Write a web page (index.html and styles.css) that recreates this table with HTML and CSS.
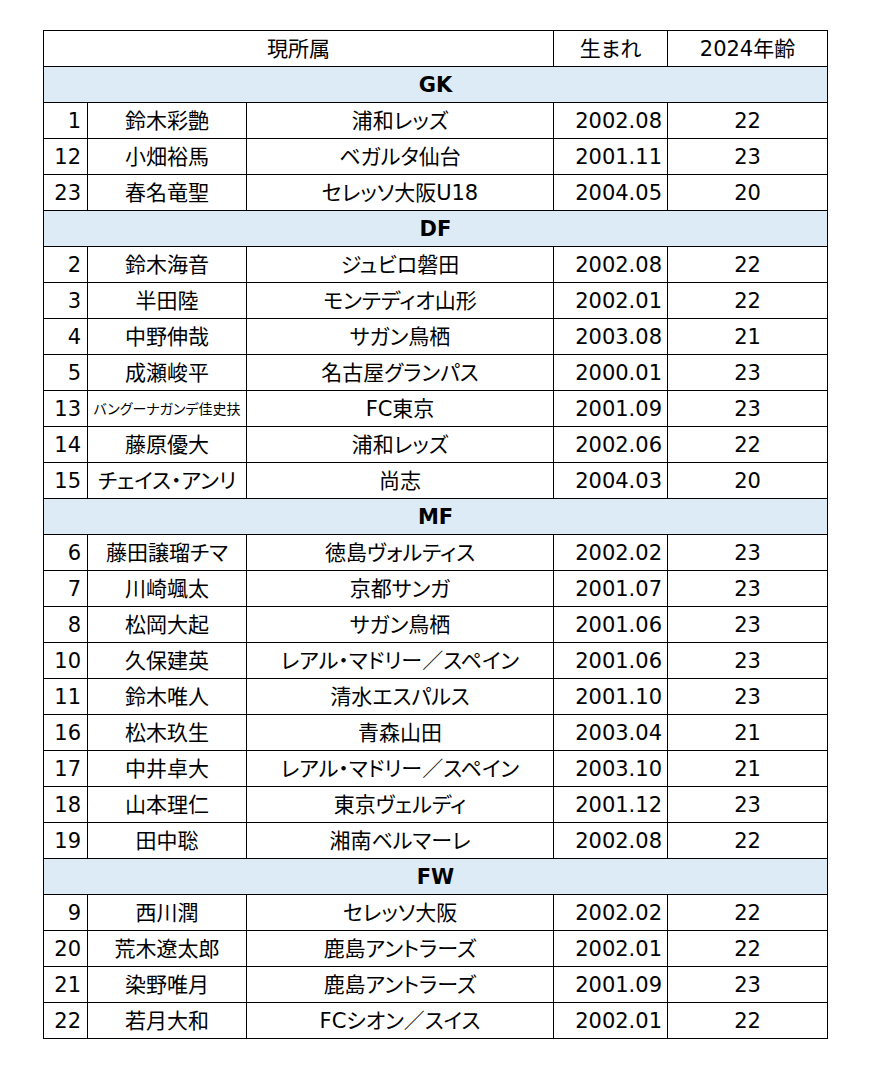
FILE: index.html
```html
<!DOCTYPE html>
<html lang="ja">
<head>
<meta charset="utf-8">
<link rel="stylesheet" href="styles.css">
</head>
<body>
<table class="roster">
<colgroup>
<col class="c-num"><col class="c-name"><col class="c-club"><col class="c-birth"><col class="c-age">
</colgroup>
<tbody>
<tr class="head"><td colspan="3">現所属</td><td>生まれ</td><td>2024年齢</td></tr>
<tr class="sec"><td colspan="5">GK</td></tr>
<tr><td class="num">1</td><td>鈴木彩艶</td><td>浦和レッズ</td><td class="birth">2002.08</td><td>22</td></tr>
<tr><td class="num">12</td><td>小畑裕馬</td><td>ベガルタ仙台</td><td class="birth">2001.11</td><td>23</td></tr>
<tr><td class="num">23</td><td>春名竜聖</td><td>セレッソ大阪U18</td><td class="birth">2004.05</td><td>20</td></tr>
<tr class="sec"><td colspan="5">DF</td></tr>
<tr><td class="num">2</td><td>鈴木海音</td><td>ジュビロ磐田</td><td class="birth">2002.08</td><td>22</td></tr>
<tr><td class="num">3</td><td>半田陸</td><td>モンテディオ山形</td><td class="birth">2002.01</td><td>22</td></tr>
<tr><td class="num">4</td><td>中野伸哉</td><td>サガン鳥栖</td><td class="birth">2003.08</td><td>21</td></tr>
<tr><td class="num">5</td><td>成瀬峻平</td><td>名古屋グランパス</td><td class="birth">2000.01</td><td>23</td></tr>
<tr><td class="num">13</td><td class="small">バングーナガンデ佳史扶</td><td>FC東京</td><td class="birth">2001.09</td><td>23</td></tr>
<tr><td class="num">14</td><td>藤原優大</td><td>浦和レッズ</td><td class="birth">2002.06</td><td>22</td></tr>
<tr><td class="num">15</td><td>チェイス・アンリ</td><td>尚志</td><td class="birth">2004.03</td><td>20</td></tr>
<tr class="sec"><td colspan="5">MF</td></tr>
<tr><td class="num">6</td><td>藤田譲瑠チマ</td><td>徳島ヴォルティス</td><td class="birth">2002.02</td><td>23</td></tr>
<tr><td class="num">7</td><td>川崎颯太</td><td>京都サンガ</td><td class="birth">2001.07</td><td>23</td></tr>
<tr><td class="num">8</td><td>松岡大起</td><td>サガン鳥栖</td><td class="birth">2001.06</td><td>23</td></tr>
<tr><td class="num">10</td><td>久保建英</td><td>レアル・マドリー／スペイン</td><td class="birth">2001.06</td><td>23</td></tr>
<tr><td class="num">11</td><td>鈴木唯人</td><td>清水エスパルス</td><td class="birth">2001.10</td><td>23</td></tr>
<tr><td class="num">16</td><td>松木玖生</td><td>青森山田</td><td class="birth">2003.04</td><td>21</td></tr>
<tr><td class="num">17</td><td>中井卓大</td><td>レアル・マドリー／スペイン</td><td class="birth">2003.10</td><td>21</td></tr>
<tr><td class="num">18</td><td>山本理仁</td><td>東京ヴェルディ</td><td class="birth">2001.12</td><td>23</td></tr>
<tr><td class="num">19</td><td>田中聡</td><td>湘南ベルマーレ</td><td class="birth">2002.08</td><td>22</td></tr>
<tr class="sec"><td colspan="5">FW</td></tr>
<tr><td class="num">9</td><td>西川潤</td><td>セレッソ大阪</td><td class="birth">2002.02</td><td>22</td></tr>
<tr><td class="num">20</td><td>荒木遼太郎</td><td>鹿島アントラーズ</td><td class="birth">2002.01</td><td>22</td></tr>
<tr><td class="num">21</td><td>染野唯月</td><td>鹿島アントラーズ</td><td class="birth">2001.09</td><td>23</td></tr>
<tr><td class="num">22</td><td>若月大和</td><td>FCシオン／スイス</td><td class="birth">2002.01</td><td>22</td></tr>
</tbody>
</table>
</body>
</html>
```

FILE: styles.css
```css
html, body {
  margin: 0;
  background: #ffffff;
}
body {
  padding: 30px 0 0 43px;
  font-family: "DejaVu Sans", "Noto Sans CJK JP", sans-serif;
  color: #000;
}
.roster {
  border-collapse: collapse;
  table-layout: fixed;
  width: 784px;
  font-size: 21px;
  font-feature-settings: "palt";
}
.c-num { width: 44px; }
.c-name { width: 159px; }
.c-club { width: 307px; }
.c-birth { width: 114px; }
.c-age { width: 160px; }
.roster td {
  border: 1px solid #000;
  height: 33px;
  padding: 2px 0 0;
  line-height: 33px;
  text-align: center;
  white-space: nowrap;
  overflow: hidden;
  vertical-align: middle;
}
.roster td.num {
  text-align: right;
  padding-right: 6px;
}
.roster td.birth {
  text-align: right;
  padding-right: 5px;
}
.roster td.small {
  font-size: 14px;
}
.roster .sec td {
  background: #ddebf7;
  font-weight: bold;
}
```
